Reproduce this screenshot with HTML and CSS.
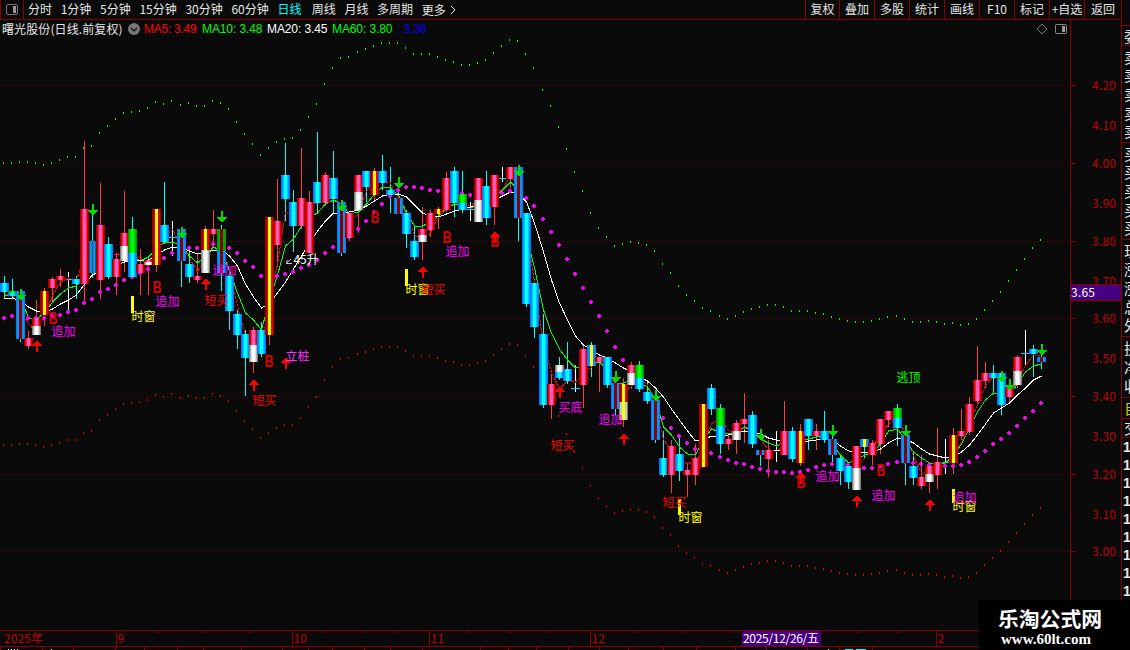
FILE: index.html
```html
<!DOCTYPE html>
<html lang="zh-CN">
<head>
    <meta charset="UTF-8">
    <title>曙光股份 日线</title>
    <link rel="stylesheet" href="styles.css">
</head>
<body>
    <div class="main">
        <div class="toolbar">
            <div class="panel-toggle">
                <svg width="12" height="11" viewBox="0 0 12 11"><rect x="0.5" y="0.5" width="11" height="10" rx="1.5" fill="none" stroke="#777"/><rect x="7" y="2" width="3" height="7" fill="#999"/></svg>
            </div>
            <div class="periods">
                <span>分时</span><span>1分钟</span><span>5分钟</span><span>15分钟</span><span>30分钟</span><span>60分钟</span><span class="active">日线</span><span>周线</span><span>月线</span><span>多周期</span><span class="more">更多<svg width="6" height="10" viewBox="0 0 6 10"><path d="M1 1L5 5L1 9" fill="none" stroke="#ddd"/></svg></span>
            </div>
            <div class="tools">
                <span>复权</span><span>叠加</span><span>多股</span><span>统计</span><span>画线</span><span>F10</span><span>标记</span><span>+自选</span><span class="back">返回</span>
            </div>
        </div>

        <div class="chart">
            <div class="plot">
                <div class="legend">
                    <span class="stock">曙光股份(日线.前复权)</span>
                    <svg class="drop" width="12" height="12" viewBox="0 0 12 12"><circle cx="6" cy="6" r="6" fill="#777"/><path d="M3 5L6 8L9 5" fill="none" stroke="#111" stroke-width="1.3"/></svg>
                    <span class="ma ma5">MA5: 3.49</span>
                    <span class="ma ma10">MA10: 3.48</span>
                    <span class="ma ma20">MA20: 3.45</span>
                    <span class="ma ma60">MA60: 3.80</span>
                    <span class="ma extra">: 3.36</span>
                    <svg class="corner" width="32" height="12" viewBox="0 0 32 12"><path d="M6 1L11 6L6 11L1 6Z" fill="none" stroke="#777"/><rect x="19.5" y="1.5" width="11" height="9" rx="1" fill="none" stroke="#888"/><rect x="26" y="3" width="3" height="6" fill="#999"/></svg>
                </div>
                <svg id="plot" width="1070" height="592" viewBox="0 38 1070 592"></svg>
            </div>
            <svg id="axis" width="51" height="610" viewBox="1070 20 51 610"></svg>
        </div>

        <svg id="timeline" width="1121" height="20" viewBox="0 630 1121 20"></svg>
    </div>

    <div class="side">
        <div class="group blank"></div>
        <div class="group weibi"><span>委</span></div>
        <div class="group five"><span>卖</span><span>卖</span><span>卖</span><span>卖</span><span>卖</span></div>
        <div class="group five"><span>买</span><span>买</span><span>买</span><span>买</span><span>买</span></div>
        <div class="group quote"><span>现</span><span>涨</span><span>涨</span><span>总</span><span>外</span></div>
        <div class="group stats"><span>换</span><span>净</span><span>收</span></div>
        <div class="group own"><span>自</span></div>
        <div class="group deal"><span>交</span></div>
        <div class="group ticks"><span>1</span><span>1</span><span>1</span><span>1</span><span>1</span><span>1</span><span>1</span><span>1</span><span>1</span></div>
    </div>

    <div class="brand">
        <div class="brand-name">乐淘公式网</div>
        <div class="brand-url">www.60lt.com</div>
    </div>

    <script src="chart.js"></script>
</body>
</html>
```

FILE: styles.css
```css
body {
    margin: 0;
    width: 1130px;
    height: 650px;
    display: flex;
    overflow: hidden;
    background: #0a0a0a;
    color: #e6e6e6;
    font-family: "Noto Sans CJK SC", "Liberation Sans", sans-serif;
    font-size: 12px;
    position: relative;
}
svg {
    display: block;
}
.main {
    width: 1121px;
    flex: none;
}
.toolbar {
    height: 19px;
    border-bottom: 1px solid #880000;
    display: flex;
    line-height: 18px;
}
.panel-toggle {
    width: 22px;
    border-left: 1px solid #880000;
    border-right: 1px solid #880000;
    display: flex;
    align-items: center;
    justify-content: center;
}
.periods {
    display: flex;
    gap: 8.7px;
    padding-left: 4px;
    flex: 1;
    white-space: nowrap;
}
.active {
    color: #00ffff;
    margin-right: 1.5px;
}
.more {
    display: flex;
    align-items: center;
    gap: 4px;
}
.tools {
    display: flex;
}
.tools span {
    width: 34px;
    border-left: 1px solid #880000;
    text-align: center;
    white-space: nowrap;
}
.tools span:first-child {
    width: 33px;
}
.tools .back {
    width: 36px;
}
.chart {
    display: flex;
}
.plot {
    width: 1070px;
}
.legend {
    height: 18px;
    display: flex;
    align-items: center;
    line-height: 18px;
    white-space: nowrap;
}
.stock {
    width: 126px;
    padding-left: 2px;
    letter-spacing: 0.1px;
}
.drop {
    margin-right: 4px;
}
.ma {
    width: 65px;
    font-family: "Liberation Sans", sans-serif;
    letter-spacing: -0.1px;
}
.ma5 {
    width: 58px;
    color: #ff0000;
    letter-spacing: -0.25px;
}
.ma10, .ma60 {
    color: #00ff00;
}
.ma20 {
    color: #ffffff;
}
.extra {
    color: #0000ff;
}
.corner {
    margin-left: auto;
    margin-right: 2px;
}
#plot text {
    font-size: 12px;
}
#plot .b-mark {
    font: bold 16px "Liberation Sans", sans-serif;
    fill: #dd0000;
}
#axis text, #timeline text {
    font-size: 12px;
    fill: #c00000;
}
#axis .current, #timeline .current {
    fill: #ffffff;
}
.side {
    width: 8px;
    height: 600px;
    flex: none;
    border-left: 1px solid #880000;
    overflow: hidden;
    font-size: 15px;
}
.group {
    box-sizing: border-box;
    border-bottom: 1px solid #880000;
    padding-left: 2px;
    display: flex;
    flex-direction: column;
    justify-content: space-evenly;
    line-height: 16px;
}
.blank {
    height: 26px;
}
.weibi {
    height: 20px;
}
.five {
    height: 97px;
}
.quote {
    height: 97px;
}
.stats {
    height: 61px;
}
.own {
    height: 21px;
    color: #cccc00;
}
.deal {
    height: 19px;
}
.ticks {
    height: 164px;
    border: 0;
    line-height: 18px;
    justify-content: flex-start;
    font-family: "Liberation Sans", sans-serif;
    font-size: 14px;
    font-weight: bold;
    padding-left: 1px;
}
.brand {
    position: absolute;
    left: 978px;
    top: 600px;
    width: 152px;
    height: 50px;
    background: #000;
    color: #fff;
    font-weight: bold;
}
.brand-name {
    margin: 7px 0 0 20px;
    font-size: 20.8px;
    line-height: 23px;
    white-space: nowrap;
}
.brand-url {
    margin-left: 23px;
    font: bold 15px/18px "Liberation Serif", serif;
}
```

FILE: chart.js
```js
// type high top bottom low [split]
const candles = `
c 276 283 292 299
g 279 291 296 298 293
d 291 291 339 342
r 331 338 346 349
w 300 318 335 335 326
y 288 291 315 326
r 277 279 288 303
r 269 276 280 287
x 272 279 279 310
c 276 279 284 299
r 141 209 284 302
b 213 241 273 278
r 183 225 280 299
c 237 244 277 279
r 253 259 277 295
w 191 233 261 272 246
g 217 229 277 277 253
r 249 264 273 295
w 257 260 265 295 262
y 209 209 265 272
c 182 225 242 244
x 221 237 237 256
d 229 229 261 287
c 252 264 277 283
r 254 276 280 283
v 226 229 273 273 250
r 210 229 234 245
k 225 229 273 291 251
c 273 276 311 330
c 310 314 335 349
c 330 334 358 396
w 327 330 362 373 345
c 322 330 354 357
y 217 217 335 345
r 179 221 245 267
c 143 175 199 221
c 190 202 226 252
r 148 198 226 229
r 191 202 253 253
c 132 182 203 212
r 172 175 203 206
c 151 178 199 213
d 200 202 253 256
r 213 213 238 241
w 175 175 210 233 192
c 171 171 187 202
y 168 171 195 202
c 155 171 183 190
c 167 190 195 213
d 188 198 214 214
c 210 213 234 248
c 225 241 257 260
w 207 229 242 260 235
r 210 213 230 237
y 207 209 214 229
r 172 178 210 212
c 167 171 203 217
g 171 194 210 213 203
x 202 209 209 221
w 178 178 222 222 200
c 171 186 218 225
r 175 175 207 225
x 167 178 178 182
r 167 167 179 188
d 165 167 218 241
c 213 213 304 307
c 279 283 327 338
c 314 334 405 408
r 374 384 405 419
m 357 365 378 380 372
c 342 369 381 384
x 365 388 388 392
r 345 349 385 408
z 342 345 366 377
r 357 357 362 392
c 357 357 385 388
d 380 383 409 415
u 378 384 420 427 402
w 362 365 385 389 373
g 361 365 389 392 378
c 380 392 401 404
d 398 400 440 443
c 431 458 475 477
r 440 446 475 493
c 438 454 471 481
r 463 470 475 497
r 444 458 475 485
y 404 404 467 467
c 384 388 409 415
g 404 408 444 454 426
r 435 439 444 450
w 420 423 440 454 431
r 393 419 424 443
c 411 415 444 448
d 450 450 455 466
r 440 450 459 477
h 431 450 450 462
r 401 431 455 455
c 427 431 459 462
y 424 431 463 466
c 419 419 436 450
r 424 431 436 450
c 411 431 440 443
d 436 439 455 462
c 454 458 471 485
c 462 466 482 489
w 446 446 490 490 468
z 439 439 447 458
r 440 443 455 465
r 419 419 444 454
r 411 411 420 427
g 404 408 428 446 418
d 433 435 463 485
c 453 466 478 485
r 455 477 486 489
w 462 466 482 493 474
r 428 462 475 489
x 439 462 462 474
y 428 435 463 474
r 409 431 436 440
r 397 404 432 435
r 346 380 401 404
r 362 373 381 388
c 365 373 378 392
c 373 373 405 415
r 387 388 397 404
w 355 357 385 388 371
x 330 353 353 365
c 345 349 354 377
d 347 357 362 369`.trim().split('\n').map(line => {
    const [type, ...v] = line.split(' ');
    const [high, top, bottom, low, split] = v.map(Number);
    return { type, high, top, bottom, low, split };
});

const trend = [318,316,317,318,318,318,316,315,312,310,303,299,292,289,285,280,277,273,269,263,258,253,
    249,248,248,246,244,246,248,253,261,267,276,277,276,274,272,268,265,260,253,247,242,237,229,221,212,204,
    196,190,187,187,188,190,191,192,193,193,195,196,195,194,193,191,193,198,206,219,232,245,259,274,288,302,
    316,331,347,360,372,380,395,408,418,428,436,443,449,451,453,457,460,463,464,467,469,471,472,472,473,472,
    470,467,465,464,464,465,467,468,468,466,464,462,462,463,464,465,466,466,466,465,462,457,451,444,439,433,
    426,418,411,403];

const upper = [163,163,162,162,163,165,163,160,157,157,148,146,133,126,119,113,112,111,108,102,104,101,
    105,103,106,106,101,103,109,122,134,144,155,148,142,139,138,130,117,104,84,68,58,57,52,49,46,43,
    43,43,48,54,54,54,57,60,62,65,65,63,60,53,46,40,41,54,68,90,106,127,149,172,191,213,
    228,237,246,244,242,243,245,251,264,273,286,295,301,308,311,316,319,316,312,309,307,305,305,307,311,311,
    311,313,314,317,319,321,322,322,321,319,317,316,319,322,322,321,322,324,323,325,324,319,310,301,292,281,
    270,259,248,240];

const slow = [299,298,301,307,311,312,309,304,300,295,284,275,271,268,265,262,260,260,260,255,250,247,
    248,251,254,253,250,250,256,266,284,297,308,303,293,282,269,256,243,231,221,213,213,212,210,206,201,196,
    194,194,197,205,213,216,217,214,211,209,207,205,203,200,196,192,194,202,223,252,280,303,320,336,345,350,
    355,358,363,368,372,377,381,388,397,409,420,431,441,440,436,436,435,433,431,432,434,438,440,440,440,
    441,441,440,438,440,446,451,452,453,452,449,443,438,439,443,449,454,456,458,457,452,445,435,424,413,408,
    403,395,388,380,376];

const fast = [296,294,297,318,319,313,302,294,288,286,270,263,258,262,262,259,256,261,257,249,242,242,
    246,256,263,256,247,251,271,293,313,320,330,300,275,246,239,226,217,213,204,200,204,214,212,204,194,187,
    188,195,213,226,226,222,216,208,204,206,208,205,200,196,190,182,190,235,268,310,333,349,360,368,366,362,
    362,370,383,383,380,382,387,400,427,435,447,454,455,440,429,432,434,432,427,431,439,443,446,443,442,441,
    439,437,436,445,455,463,460,455,453,444,431,429,440,452,458,463,464,463,455,444,428,412,400,393,395,395,
    384,372,366,364];

const shades = {
    red: [['#a00000', 9], ['#d80000', 7], ['#ff2828', 5], ['#ff5ac8', 3]],
    cyan: [['#0078ff', 9], ['#0096ff', 7], ['#00c8ff', 5], ['#00ffff', 3]],
    white: [['#808080', 9], ['#b4b4b4', 7], ['#e0e0e0', 5], ['#ffffff', 3]],
    green: [['#009600', 9], ['#00b400', 7], ['#00dc00', 5], ['#00ff00', 3]],
    yellow: [['#a00000', 9], ['#dc0000', 6], ['#ffff00', 3]],
    yellowWhite: [['#808080', 9], ['#c8c8c8', 7], ['#ffff00', 3]],
    yellowCyan: [['#0078ff', 9], ['#0096ff', 7], ['#ffff00', 3]],
    dark: [['#0078ff', 9], ['#0096ff', 7], ['#8c0000', 3]],
    darkGreen: [['#009600', 9], ['#00aa00', 7], ['#8c0000', 3]],
    dim: [['#0064c8', 7], ['#0096e6', 5], ['#005078', 1]]
};
const bodies = {
    r: ['red'], c: ['cyan'], y: ['yellow'], d: ['dark'], b: ['dim'], z: ['yellowCyan'],
    w: ['red', 'white'], g: ['green', 'cyan'], v: ['yellow', 'white'], u: ['yellow', 'yellowWhite'],
    m: ['white', 'cyan'], k: ['darkGreen', 'dark']
};

const xAt = i => 4 + Math.floor(i * 8.0452 + 0.015);
const rect = (x, y, w, h, fill) => `<rect x="${x}" y="${y}" width="${w}" height="${h}" fill="${fill}"/>`;
const isUp = t => 'rwyvu'.includes(t);

function body(x, top, bottom, shade) {
    return shades[shade].map(([color, w]) => rect(x - (w - 1) / 2, top, w, bottom - top, color)).join('');
}

function average(n, seed) {
    const close = Array(n).fill(seed).concat(candles.map(c => isUp(c.type) ? c.top : c.bottom));
    return candles.map((c, i) => close.slice(i + 1, i + 1 + n).reduce((a, b) => a + b) / n);
}

function line(values, color, dash) {
    const points = values.map((v, i) => `${xAt(i) + 0.5},${v.toFixed(1)}`).join(' ');
    return `<polyline points="${points}" fill="none" stroke="${color}" ${dash ? `stroke-dasharray="${dash}"` : ''}/>`;
}

const priceY = [85, 124, 163, 202, 241, 280, 318, 357, 396, 435, 474, 513, 551];
let out = '<g shape-rendering="crispEdges">';

// grid
priceY.filter((y, i) => i % 2 === 0).forEach(y => {
    for (let x = 3; x < 1068; x += 4) out += rect(x, y, 1, 1, '#780000');
});

// channel dots, lower band follows the upper one by a fixed ratio
upper.forEach((y, i) => {
    const price = 4 + (163.5 - y) / 388.3;
    out += rect(xAt(i) - 1, y - 1, 1, 2, '#00ff00');
    out += rect(xAt(i) - 1, Math.round(163.5 - (price * 0.8185 - 4) * 388.3) - 1, 1, 2, '#ff0000');
});

candles.forEach((c, i) => {
    const flat = c.type === 'x' || c.type === 'h';
    out += rect(xAt(i), c.high, 1, c.low - c.high, flat ? '#ffffff' : isUp(c.type) ? '#ff3c3c' : '#00ffff');
    if (flat) out += rect(xAt(i) - 4, c.top, 9, 1, c.type === 'h' ? '#ffffff' : '#00d2ff');
});
out += line(average(3, 296), '#ff0000', '3 1');
out += line(fast, '#00ff00');
out += line(slow, '#ffffff');
trend.forEach((y, i) => {
    out += rect(xAt(i) - 2, y - 1, 4, 2, '#ff00ff') + rect(xAt(i) - 1, y - 2, 2, 4, '#ff00ff');
});
candles.forEach((c, i) => {
    const kinds = bodies[c.type];
    if (!kinds) return;
    out += body(xAt(i), c.top, c.split || c.bottom, kinds[0]);
    if (c.split) out += body(xAt(i), c.split, c.bottom, kinds[1]);
});

// signals
[[132, 296, 17], [406, 269, 17], [679, 499, 16], [953, 489, 14]].forEach(([x, y, h]) => {
    out += rect(x - 1, y, 3, h, '#ffff00');
});
[[93, 204], [21, 289], [182, 227], [222, 211], [342, 200], [399, 177], [519, 165], [616, 371], [656, 390],
 [761, 429], [833, 425], [906, 425], [1002, 371], [1010, 379], [1042, 344]].forEach(([x, y]) => {
    out += `<path d="M${x - 1} ${y}h2v6h4l-5 6l-5 -6h4z" fill="#00dc00"/>`;
});
out += '</g>';
[[53, 318], [157, 287], [269, 361], [375, 217], [447, 237], [495, 241], [801, 482], [881, 470]].forEach(([x, y]) => {
    out += `<text class="b-mark" x="${x - 4.5}" y="${y + 6}" textLength="9" lengthAdjust="spacingAndGlyphs">B</text>`;
});
[[37, 340], [206, 278], [254, 379], [286, 357], [423, 266], [495, 231], [560, 386], [624, 433], [801, 472],
 [857, 495], [930, 499]].forEach(([x, y]) => {
    out += `<path d="M${x - 1} ${y + 12}h2v-6h4l-5 -6l-5 6h4z" fill="#ff0000" shape-rendering="crispEdges"/>`;
});

const labels = [
    ['时窗', '#ffff00', [131, 316], [405, 289], [678, 517], [952, 506]],
    ['追加', '#ff00ff', [51, 331], [155, 301], [212, 270], [445, 251], [598, 419], [815, 476], [871, 495], [952, 497]],
    ['短买', '#ff0000', [204, 300], [252, 400], [421, 289], [550, 445], [662, 502]],
    ['买底', '#ff00ff', [558, 407]],
    ['立桩', '#ff32ff', [285, 356]],
    ['逃顶', '#00ff00', [896, 377]],
    ['45升', '#ffffff', [293, 259]]
];
labels.forEach(([text, color, ...spots]) => spots.forEach(([x, y]) => {
    out += `<text x="${x + 0.4}" y="${y + 4.5}" fill="${color}">${text}</text>`;
}));
out += '<path d="M291 259L286 263.5H292M287 260V263" fill="none" stroke="#ccc"/>';
document.getElementById('plot').innerHTML = out;

// price axis
let axis = rect(1070, 20, 1, 610, '#880000');
priceY.forEach((y, i) => {
    axis += rect(1071, y, i % 2 ? 2 : 5, 1, '#880000');
    axis += `<text x="1092" y="${y + (i % 2 ? 6 : 5)}" textLength="24">${(4.2 - i * 0.1).toFixed(2)}</text>`;
});
axis += rect(1071, 284, 50, 17, '#880000') + rect(1071, 285, 50, 15, '#460082');
axis += '<text class="current" x="1071" y="296.5" textLength="24">3.65</text>';
document.getElementById('axis').innerHTML = axis;

// time axis
let time = rect(0, 630, 978, 1, '#880000') + rect(0, 646, 978, 1, '#880000');
[[116, '9'], [292, '10'], [429, '11'], [590, '12'], [936, '2']].forEach(([x, text]) => {
    time += rect(x, 631, 1, 15, '#880000') + `<text x="${x + 1.5}" y="643">${text}</text>`;
});
[159, 204, 248, 326, 361, 395, 469, 511, 550, 636, 683, 729, 856, 896].forEach(x => {
    time += rect(x, 631, 1, 2, '#880000');
});
[0, 42, 73, 115, 144, 177, 203, 241, 282, 308, 332, 364, 390, 422, 480, 508, 536, 568, 599, 628, 663, 696,
 735, 766, 807, 839, 872].forEach(x => {
    time += rect(x, 647, 1, 3, '#880000');
});
time += '<text x="4" y="643" textLength="39">2025年</text>';
time += rect(742, 631, 79, 15, '#460082');
time += '<text class="current" x="743" y="642.5" textLength="76">2025/12/26/五</text>';
// tops of the indicator caption under the axis
time += '<path d="M8 649.5H20" stroke="#fff" stroke-dasharray="1 2"/><path d="M51 649.5h1M828 649.5h1" stroke="#fff"/><path d="M845 649.5h8m3 0h10" stroke="#00ffff"/>';
document.getElementById('timeline').innerHTML = time;
```
